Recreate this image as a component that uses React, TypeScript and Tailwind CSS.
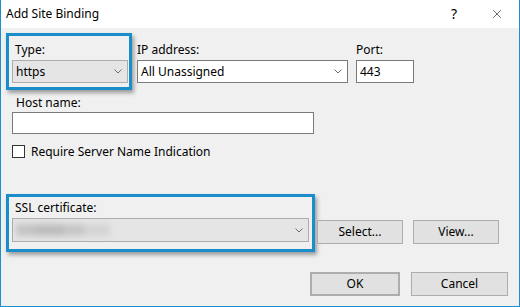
import { X } from 'lucide-react';

const font = { fontFamily: '"Noto Sans", "Segoe UI", Arial, sans-serif' };

function Chevron() {
  return (
    <svg width="8" height="5" viewBox="0 0 8 5" className="shrink-0">
      <path d="M0.5 0.5 L4 4 L7.5 0.5" fill="none" stroke="#6d6d6d" strokeWidth="1" />
    </svg>
  );
}

function Button({ label, className = '' }: { label: string; className?: string }) {
  return (
    <div
      className={`flex items-center justify-center bg-[#e1e1e1] border border-[#adadad] text-[12px] text-black ${className}`}
    >
      {label}
    </div>
  );
}

export default function App() {
  return (
    <div
      style={font}
      className="w-[520px] h-[307px] bg-[#f0f0f0] border-x border-b border-[#1c8fd2] flex flex-col text-[12px] text-black overflow-hidden"
    >
      {/* title bar */}
      <div className="h-[28px] bg-white flex items-center shrink-0">
        <span className="ml-[5px] text-[12px] leading-none">Add Site Binding</span>
        <span className="ml-auto mr-[33px] text-[14px] leading-none">?</span>
        <X className="mr-[15px] text-black" size={14} strokeWidth={1} />
      </div>

      <div className="flex flex-col pl-[5px] pt-[5px]">
        {/* row 1 */}
        <div className="flex items-start">
          <div className="w-[126px] h-[57px] border-[3px] border-[#1a8ecb] shadow-[2px_3px_4px_rgba(0,0,0,0.35)] flex flex-col pl-[3px]">
            <div className="h-[24px] pt-[7px] pl-[3px] leading-[14px]">Type:</div>
            <div className="w-[116px] h-[23px] bg-[#e5e5e5] border border-[#adadad] flex items-center pl-[3px] pr-[5px]">
              <span>https</span>
              <span className="ml-auto"><Chevron /></span>
            </div>
          </div>

          <div className="ml-[5px] flex flex-col">
            <div className="h-[27px] pt-[10px] leading-[14px]">IP address:</div>
            <div className="w-[211px] h-[23px] bg-white border border-[#7a7a7a] flex items-center pl-[3px] pr-[5px]">
              <span>All Unassigned</span>
              <span className="ml-auto"><Chevron /></span>
            </div>
          </div>

          <div className="ml-[8px] flex flex-col">
            <div className="h-[27px] pt-[10px] leading-[14px]">Port:</div>
            <div className="w-[58px] h-[23px] bg-white border border-[#7a7a7a] flex items-center pl-[3px]">
              443
            </div>
          </div>
        </div>

        {/* host name */}
        <div className="pl-[10px] mt-[5px] h-[17px] leading-[14px] pt-[1px]">Host name:</div>
        <div className="ml-[6px] w-[302px] h-[22px] bg-white border border-[#7a7a7a]" />

        <div className="ml-[6px] mt-[11px] h-[13px] flex items-center gap-[6px]">
          <div className="w-[13px] h-[13px] bg-white border border-[#333]" />
          <span className="leading-[13px]">Require Server Name Indication</span>
        </div>

        {/* ssl */}
        <div className="mt-[36px] flex items-start">
          <div className="w-[309px] h-[58px] border-[3px] border-[#1a8ecb] shadow-[2px_3px_4px_rgba(0,0,0,0.35)] flex flex-col pl-[3px]">
            <div className="h-[21px] pt-[4px] pl-[3px] leading-[14px]">SSL certificate:</div>
            <div className="w-[297px] h-[24px] bg-[#e5e5e5] border border-[#adadad] flex items-center pl-[3px] pr-[5px] overflow-hidden">
              <div className="flex items-center blur-[3px]">
                <div className="w-[18px] h-[12px] bg-[#c4c4c4]" />
                <div className="w-[30px] h-[12px] bg-[#bcbcbc]" />
                <div className="w-[20px] h-[12px] bg-[#c6c6c6]" />
                <div className="w-[26px] h-[12px] bg-[#d4d4d4]" />
              </div>
              <span className="ml-auto"><Chevron /></span>
            </div>
          </div>
          <Button label="Select..." className="ml-[2px] mt-[26px] w-[86px] h-[24px]" />
          <Button label="View..." className="ml-[10px] mt-[26px] w-[86px] h-[24px]" />
        </div>

        {/* ok / cancel */}
        <div className="mt-[20px] flex">
          <Button label="OK" className="ml-[304px] w-[90px] h-[24px] border-2 border-[#0078d7]" />
          <Button label="Cancel" className="ml-[11px] w-[97px] h-[24px]" />
        </div>
      </div>
    </div>
  );
}
